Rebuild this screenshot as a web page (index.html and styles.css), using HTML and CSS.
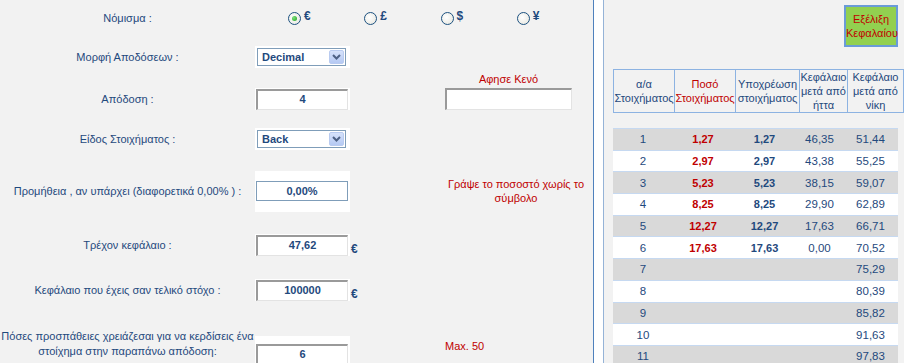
FILE: index.html
```html
<!DOCTYPE html>
<html lang="el">
<head>
<meta charset="utf-8">
<title>Εξέλιξη Κεφαλαίου</title>
<link rel="stylesheet" href="styles.css">
</head>
<body>
<div class="page">
  <div class="form">
    <div class="label">Νόμισμα :</div>
    <div class="radios">
      <div class="opt"><span class="radio checked"></span><b>€</b></div>
      <div class="opt"><span class="radio"></span><b>£</b></div>
      <div class="opt"><span class="radio"></span><b>$</b></div>
      <div class="opt"><span class="radio"></span><b>¥</b></div>
    </div>

    <div class="label">Μορφή Αποδόσεων :</div>
    <div class="box"><div class="select">Decimal<span class="arrow"><svg width="9" height="6" viewBox="0 0 9 6"><path d="M1 1 L4.5 4.5 L8 1" fill="none" stroke="#4d6185" stroke-width="2"/></svg></span></div></div>
    <div class="span3"></div>

    <div class="label">Απόδοση :</div>
    <div class="box"><div class="inset">4</div></div>
    <div></div><div></div>
    <div class="blank"><div class="note">Αφησε Κενό</div><div class="inset wide"></div></div>

    <div class="label">Είδος Στοιχήματος :</div>
    <div class="box"><div class="select">Back<span class="arrow"><svg width="9" height="6" viewBox="0 0 9 6"><path d="M1 1 L4.5 4.5 L8 1" fill="none" stroke="#4d6185" stroke-width="2"/></svg></span></div></div>
    <div class="span3"></div>

    <div class="label">Προμήθεια , αν υπάρχει (διαφορετικά 0,00% ) :</div>
    <div class="box tall"><div class="flat">0,00%</div></div>
    <div></div><div></div>
    <div class="note hint">Γράψε το ποσοστό χωρίς το σύμβολο</div>

    <div class="label">Τρέχον κεφάλαιο :</div>
    <div class="box"><div class="inset">47,62</div></div>
    <div class="cur">€</div>
    <div class="span2"></div>

    <div class="label">Κεφάλαιο που έχεις σαν τελικό στόχο :</div>
    <div class="box"><div class="inset">100000</div></div>
    <div class="cur">€</div>
    <div class="span2"></div>

    <div class="label two">Πόσες προσπάθειες χρειάζεσαι για να κερδίσεις ένα<br>στοίχημα στην παραπάνω απόδοση:</div>
    <div class="box last"><div class="inset">6</div></div>
    <div></div><div></div>
    <div class="note max">Max. 50</div>
  </div>

  <div class="divider"></div>

  <div class="side">
    <div class="btnrow"><div class="btn">Εξέλιξη<br>Κεφαλαίου</div></div>
    <table class="head">
      <tr>
        <th class="c1">α/α<br>Στοιχήματος</th>
        <th class="c2 red">Ποσό<br>Στοιχήματος</th>
        <th class="c3">Υποχρέωση<br>στοιχήματος</th>
        <th class="c4">Κεφάλαιο<br>μετά από<br>ήττα</th>
        <th class="c5">Κεφάλαιο<br>μετά από<br>νίκη</th>
      </tr>
    </table>
    <table class="data">
      <tr><td class="c1">1</td><td class="c2 red b">1,27</td><td class="c3 b">1,27</td><td class="c4">46,35</td><td class="c5">51,44</td></tr>
      <tr><td class="c1">2</td><td class="c2 red b">2,97</td><td class="c3 b">2,97</td><td class="c4">43,38</td><td class="c5">55,25</td></tr>
      <tr><td class="c1">3</td><td class="c2 red b">5,23</td><td class="c3 b">5,23</td><td class="c4">38,15</td><td class="c5">59,07</td></tr>
      <tr><td class="c1">4</td><td class="c2 red b">8,25</td><td class="c3 b">8,25</td><td class="c4">29,90</td><td class="c5">62,89</td></tr>
      <tr><td class="c1">5</td><td class="c2 red b">12,27</td><td class="c3 b">12,27</td><td class="c4">17,63</td><td class="c5">66,71</td></tr>
      <tr><td class="c1">6</td><td class="c2 red b">17,63</td><td class="c3 b">17,63</td><td class="c4">0,00</td><td class="c5">70,52</td></tr>
      <tr><td class="c1">7</td><td class="c2"></td><td class="c3"></td><td class="c4"></td><td class="c5">75,29</td></tr>
      <tr><td class="c1">8</td><td class="c2"></td><td class="c3"></td><td class="c4"></td><td class="c5">80,39</td></tr>
      <tr><td class="c1">9</td><td class="c2"></td><td class="c3"></td><td class="c4"></td><td class="c5">85,82</td></tr>
      <tr><td class="c1">10</td><td class="c2"></td><td class="c3"></td><td class="c4"></td><td class="c5">91,63</td></tr>
      <tr><td class="c1">11</td><td class="c2"></td><td class="c3"></td><td class="c4"></td><td class="c5">97,83</td></tr>
    </table>
  </div>
</div>
</body>
</html>
```

FILE: styles.css
```css
html, body {
  margin: 0;
  padding: 0;
  background: #f2f2f2;
  height: 363px;
  overflow: hidden;
}
body {
  font-family: "Liberation Sans", Arial, sans-serif;
  font-size: 11px;
  color: #1f497d;
}
.page {
  display: flex;
  height: 363px;
  overflow: hidden;
}
.form {
  width: 593px;
  flex: none;
  display: grid;
  grid-template-columns: 255px 95px 12px 83px 148px;
  grid-template-rows: 36px 42px 42px 38px 66px 42px 48px 57px;
  align-items: center;
}
.label {
  text-align: center;
  line-height: 14px;
}
.label.two {
  line-height: 15px;
  padding-top: 3px;
}
.radios {
  grid-column: 2 / 6;
  display: flex;
  padding-left: 33px;
}
.opt {
  width: 78px;
  display: flex;
  align-items: center;
  gap: 3px;
}
.opt b {
  font-size: 12px;
  line-height: 12px;
  margin-top: -4px;
}
.radio {
  width: 11px;
  height: 11px;
  border: 1px solid #1c5180;
  border-radius: 50%;
  background: radial-gradient(circle at 40% 40%, #ffffff 0, #e4e4dc 100%);
  display: flex;
  align-items: center;
  justify-content: center;
}
.radio.checked::after {
  content: "";
  width: 5px;
  height: 5px;
  border-radius: 50%;
  background: radial-gradient(circle at 35% 35%, #7ce07c 0, #21a121 100%);
}
.span3 { grid-column: 3 / 6; }
.span2 { grid-column: 4 / 6; }
.box {
  background: #ffffff;
  height: 22px;
  padding: 0 2px 0 1px;
  display: flex;
  align-items: center;
}
.box.tall {
  height: 41px;
}
.box.last {
  height: 37px;
  align-self: end;
  margin-bottom: -2px;
}
.select {
  box-sizing: border-box;
  width: 89px;
  height: 18px;
  margin-left: 1px;
  border: 1px solid #7f9db9;
  background: #fff;
  font-weight: bold;
  font-size: 11px;
  display: flex;
  align-items: center;
  justify-content: space-between;
  padding-left: 4px;
  padding-right: 1px;
}
.arrow {
  width: 15px;
  height: 14px;
  box-sizing: border-box;
  border: 1px solid #b9cbf0;
  border-radius: 2px;
  background: linear-gradient(#d6e2fb, #b5c9f3);
  display: flex;
  align-items: center;
  justify-content: center;
}
.inset {
  box-sizing: border-box;
  width: 92px;
  height: 21px;
  border-style: solid;
  border-width: 2px 1px 1px 2px;
  border-color: #9a9a9a #e3e3e3 #e3e3e3 #9a9a9a;
  background: #fff;
  font-weight: bold;
  text-align: center;
  line-height: 17px;
}
.inset.wide {
  width: 127px;
  height: 22px;
}
.flat {
  box-sizing: border-box;
  width: 93px;
  height: 20px;
  border: 1px solid #7f9db9;
  background: #fff;
  font-weight: bold;
  text-align: center;
  line-height: 18px;
}
.cur {
  font-weight: bold;
  font-size: 12px;
  padding-left: 1px;
  margin-top: 7px;
}
.note {
  color: #c00000;
}
.blank {
  align-self: end;
  margin-bottom: 10px;
  width: 127px;
  display: flex;
  flex-direction: column;
  align-items: center;
  gap: 3px;
}
.hint {
  width: 142px;
  text-align: center;
  line-height: 14px;
}
.max {
  padding-top: 6px;
}
.divider {
  width: 9px;
  flex: none;
  background: #fff;
  border-left: 1px solid #4f81bd;
  border-right: 1px solid #95b3d7;
}
.side {
  width: 300px;
  flex: none;
  padding-left: 9px;
  box-sizing: border-box;
}
.btnrow {
  display: flex;
  justify-content: flex-end;
  padding: 5px 6px 0 0;
  height: 69px;
  box-sizing: border-box;
}
.btn {
  box-sizing: border-box;
  width: 54px;
  height: 42px;
  background: #92d050;
  border: 2px solid #6a9bd8;
  color: #c00000;
  text-align: center;
  line-height: 14px;
  padding-top: 5px;
}
table {
  border-collapse: collapse;
  width: 285px;
  table-layout: fixed;
}
.c1 { width: 60px; }
.c2 { width: 60px; }
.c3 { width: 63px; }
.c4 { width: 47px; }
.c5 { width: 55px; }
.head th {
  border: 1px solid #8db3e2;
  font-weight: normal;
  height: 42px;
  padding: 0;
  line-height: 14px;
  text-align: center;
  vertical-align: middle;
  white-space: nowrap;
  overflow: hidden;
}
.red { color: #c00000; }
.data {
  margin-top: 15px;
  border-top: 1px solid #c6d9f1;
}
.data td {
  height: 20.7px;
  padding: 0;
  border-bottom: 1px solid #c6d9f1;
  text-align: center;
  line-height: 14px;
  font-size: 11.5px;
}
.data td.b {
  font-weight: bold;
  font-size: 11px;
}
.data tr:nth-child(odd) td { background: #d9d9d9; }
.data tr:nth-child(even) td { background: #ffffff; }
```
